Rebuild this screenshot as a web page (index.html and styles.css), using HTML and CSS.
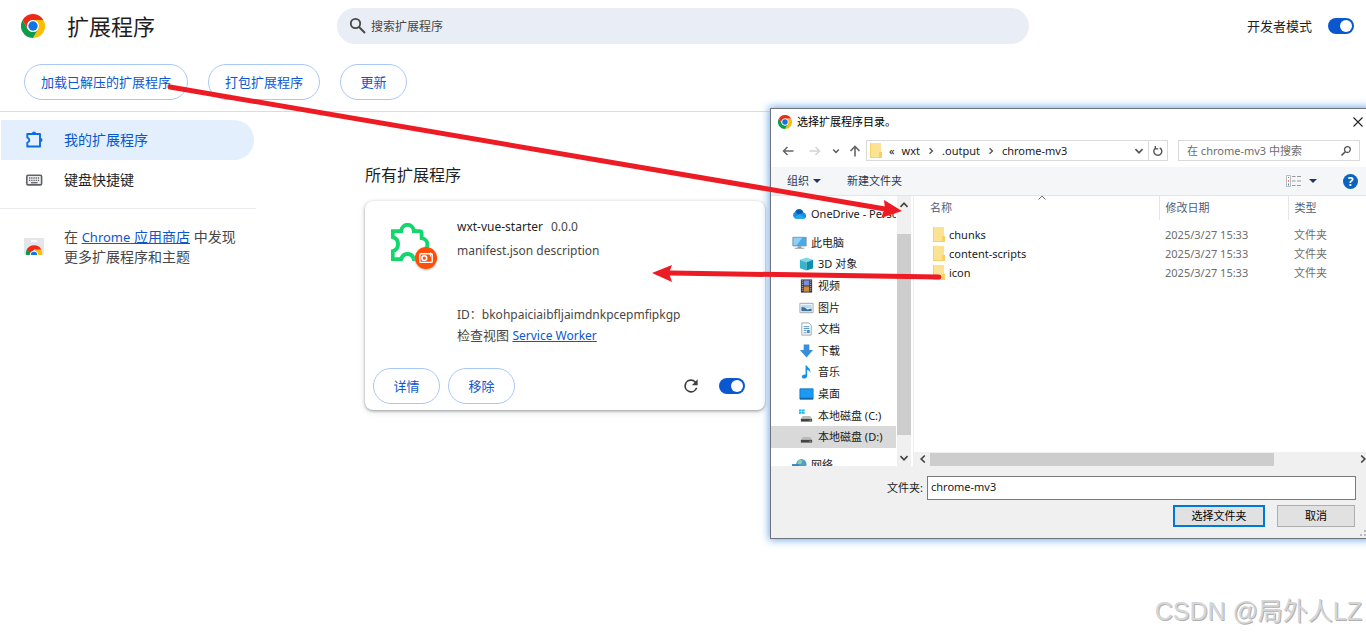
FILE: index.html
```html
<!DOCTYPE html>
<html lang="zh-CN">
<head>
<meta charset="utf-8">
<title>扩展程序</title>
<meta name="viewport" content="width=device-width, initial-scale=1">
<link rel="stylesheet" href="styles.css">
</head>
<body>
<svg class="sprite" aria-hidden="true">
  <symbol id="chrome" viewBox="0 0 48 48">
    <path fill="#fdbd00" d="M24 12h20.8A24 24 0 0 1 24 48l10.4-18z"/>
    <path fill="#0b9d4d" d="M3.2 12A24 24 0 0 0 24 48l10.4-18a12 12 0 0 1-20.8 0z"/>
    <path fill="#ee2a16" d="M3.2 12a24 24 0 0 1 41.6 0H24a12 12 0 0 0-10.4 18z"/>
    <circle cx="24" cy="24" r="12" fill="#fff"/>
    <circle cx="24" cy="24" r="9.4" fill="#1073e8"/>
  </symbol>
  <symbol id="folder" viewBox="0 0 12 15">
    <path fill="#fce394" d="M0 0h11v9h1v6H0z"/>
    <path fill="#f6d266" d="M0 0h1v15H0zM9 9h3v6H9zM0 14h12v1H0z"/>
  </symbol>
  <symbol id="chev" viewBox="0 0 10 10">
    <path d="M1.500 3.200 5 6.800l3.500-3.600" fill="none" stroke="currentColor" stroke-width="1.700"/>
  </symbol>
  <symbol id="puzzle" viewBox="0 0 20 20">
    <path d="M3.300 4H16v12.500H3.300v-3.800q2-.600 2-2.500t-2-2.500z" fill="none" stroke="currentColor" stroke-width="1.900" stroke-linejoin="round"/>
    <path d="M8 3.500a2 2 0 0 1 4 0zM16.500 8a2 2 0 0 1 0 4z" fill="currentColor"/>
  </symbol>
</svg>

<header class="topbar">
  <div class="brand">
    <svg class="logo"><use href="#chrome"/></svg>
    <h1>扩展程序</h1>
  </div>
  <label class="search">
    <svg class="search-icon" viewBox="0 0 18 18"><circle cx="6.500" cy="6.500" r="4.700" fill="none" stroke="#474747" stroke-width="1.800"/><path d="m10 10 6 6" stroke="#474747" stroke-width="2"/></svg>
    <input type="search" placeholder="搜索扩展程序" aria-label="搜索扩展程序">
  </label>
  <label class="dev-mode">开发者模式 <input class="switch" type="checkbox" role="switch" checked></label>
</header>

<div class="actions">
  <button class="pill" type="button">加载已解压的扩展程序</button>
  <button class="pill" type="button">打包扩展程序</button>
  <button class="pill" type="button">更新</button>
</div>

<div class="layout">
  <nav class="sidebar">
    <a class="nav-item active" href="#extensions"><svg class="nav-icon"><use href="#puzzle"/></svg>我的扩展程序</a>
    <a class="nav-item" href="#shortcuts">
      <svg class="nav-icon" viewBox="0 0 20 20"><rect x="2.800" y="5.300" width="14.800" height="9.600" rx="1.200" fill="#eee" stroke="#5f6368" stroke-width="1.600"/><path d="M5 8h10.500M5 10.300h10.500" stroke="#5f6368" stroke-width="1.300" stroke-dasharray="1.300 .900"/><path d="M7 12.700h6.500" stroke="#5f6368" stroke-width="1.300"/></svg>键盘快捷键</a>
    <div class="store">
      <svg class="store-icon" viewBox="0 0 20 18">
        <path fill="#e3e6ea" d="M0 0h20v16l-1 1H1l-1-1z"/><path fill="#fff" d="M7 2h6v2H7z"/>
        <path fill="#0b9d4d" d="M2 17a8 8 0 0 1 2-7l4 7z"/><path fill="#fdbd00" d="M11 11h6a8 8 0 0 1 1 6h-7z"/>
        <path fill="#ee2a16" d="M3 11.500a8.200 8.200 0 0 1 14.300 0H10L7 15z"/>
        <path fill="#fff" d="M5.800 17a4.200 4.200 0 0 1 8.400 0z"/><path fill="#1073e8" d="M6.800 17a3.200 3.200 0 0 1 6.400 0z"/>
      </svg>
      <p>在 <a href="#store"><span class="latin">Chrome</span> 应用商店</a> 中发现更多扩展程序和主题</p>
    </div>
  </nav>

  <main class="content">
    <h2>所有扩展程序</h2>
    <article class="card">
      <div class="card-main">
        <div class="ext-icon">
          <svg class="ext-puzzle" viewBox="0 0 108 108"><path d="M5 103V80C25 75 25 45 5 40V23H29C31-1 63-1 65 23H81Q87 23 87 29V43C109 46 109 76 87 79V103H65C60 83 34 83 29 103Z" fill="none" stroke="#11d76d" stroke-width="11"/></svg>
          <svg class="ext-badge" viewBox="0 0 22 22"><circle cx="11" cy="11" r="11" fill="#ff4e08"/><rect x="4.800" y="6.800" width="12.400" height="8.600" rx="1" fill="none" stroke="#fff" stroke-width="1.400"/><circle cx="9.300" cy="11.100" r="2.400" fill="none" stroke="#fff" stroke-width="1.600"/><path d="M15.500 5.500v4M14 7h3.500" stroke="#fff"/></svg>
        </div>
        <div class="ext-info">
          <div class="ext-title"><h3>wxt-vue-starter</h3><span>0.0.0</span></div>
          <p class="ext-desc">manifest.json description</p>
          <p class="ext-id">ID：bkohpaiciaibfljaimdnkpcepmfipkgp</p>
          <p class="ext-views">检查视图 <a href="#worker">Service Worker</a></p>
        </div>
      </div>
      <div class="card-foot">
        <button class="pill" type="button">详情</button>
        <button class="pill" type="button">移除</button>
        <button class="reload" type="button" aria-label="重新加载"><svg viewBox="0 0 24 24"><path fill="#3c4043" d="M17.650 6.350A8 8 0 1 0 19.730 14h-2.080A6 6 0 1 1 12 6c1.660 0 3.140.690 4.220 1.780L13 11h7V4z"/></svg></button>
        <input class="switch" type="checkbox" role="switch" aria-label="启用" checked>
      </div>
    </article>
  </main>
</div>

<section class="dialog" role="dialog" aria-label="选择扩展程序目录。">
  <div class="dlg-title">
    <svg class="dlg-logo"><use href="#chrome"/></svg>
    <span>选择扩展程序目录。</span>
    <button class="icon-btn close" type="button" aria-label="关闭"><svg viewBox="0 0 10 10"><path d="m.500.500 9 9M9.500.500l-9 9" stroke="#222" stroke-width="1.100"/></svg></button>
  </div>
  <div class="dlg-nav">
    <button class="icon-btn" type="button" aria-label="后退"><svg class="i12" viewBox="0 0 12 12"><path d="M11.500 6H1.500M5.500 2l-4 4 4 4" fill="none" stroke="#666" stroke-width="1.500"/></svg></button>
    <button class="icon-btn" type="button" aria-label="前进"><svg class="i12" viewBox="0 0 12 12"><path d="M.500 6h10M6.500 2l4 4-4 4" fill="none" stroke="#d4d4d4" stroke-width="1.500"/></svg></button>
    <button class="icon-btn recent" type="button" aria-label="最近"><svg class="i8"><use href="#chev"/></svg></button>
    <button class="icon-btn" type="button" aria-label="向上"><svg class="i12" viewBox="0 0 12 12"><path d="M6 11.500v-10M1.500 6 6 1.500 10.500 6" fill="none" stroke="#666" stroke-width="1.600"/></svg></button>
    <div class="address">
      <svg class="folder"><use href="#folder"/></svg>
      <span class="back-crumbs">«</span><span class="crumb">wxt</span>
      <svg class="crumb-sep"><use href="#chev"/></svg><span class="crumb">.output</span>
      <svg class="crumb-sep"><use href="#chev"/></svg><span class="crumb">chrome-mv3</span>
      <button class="icon-btn history" type="button" aria-label="历史"><svg class="i10"><use href="#chev"/></svg></button>
      <button class="icon-btn refresh" type="button" aria-label="刷新"><svg class="i10" viewBox="0 0 10 10"><path d="M6.800 1.800A4 4 0 1 1 2.500 2M2.300 0v2.900h3" fill="none" stroke="#555" stroke-width="1.400"/></svg></button>
    </div>
    <label class="dlg-search"><input type="text" placeholder="在 chrome-mv3 中搜索" aria-label="搜索">
      <svg class="i10" viewBox="0 0 10 10"><circle cx="6.400" cy="3.600" r="2.900" fill="none" stroke="#555" stroke-width="1.300"/><path d="M4.300 5.700.500 9.500" stroke="#555" stroke-width="1.600"/></svg></label>
  </div>
  <div class="dlg-tools">
    <button class="tool" type="button">组织 <i class="tri"></i></button>
    <button class="tool" type="button">新建文件夹</button>
    <button class="tool view" type="button" aria-label="视图"><svg viewBox="0 0 16 12"><path fill="#fff" stroke="#aaa" stroke-width=".800" d="M.500.500h4v11h-4z"/><path fill="#777" d="M2 2h1v1H2z"/><path fill="#e77" d="M2 5h1v2H2z"/><path fill="#48c" d="M2 8.500h1v2H2z"/><path d="M6 1.500h3.500M11 1.500h4M6 6h3.500M11 6h4M6 10.500h3.500M11 10.500h4" stroke="#999"/></svg><i class="tri"></i></button>
    <button class="help" type="button" aria-label="帮助">?</button>
  </div>

  <div class="dlg-body">
    <div class="tree">
      <ul class="tree-list">
        <li><svg viewBox="0 0 16 14"><path fill="#1490df" d="M4 12a4 4 0 0 1-.500-7.500A4.500 4.500 0 0 1 12 5.500a3.300 3.300 0 0 1 .500 6.500z"/><path fill="#0a5cad" d="M3.500 4.500A4.500 4.500 0 0 1 12 5.500L7 8z"/><path fill="#28a8ea" d="m2 11 6-4 6 4.500-1.500.500H4z"/></svg><span>OneDrive - Personal</span></li>
      </ul>
      <ul class="tree-list computer">
        <li><svg viewBox="0 0 16 14"><path fill="#4aa9e8" stroke="#6d8aa0" stroke-width=".800" d="M.900.900h14.200v9.200H.900z"/><path fill="#8fd0f7" d="M1.500 1.500H11l-6 8H1.500z"/><path fill="#8d9ba6" d="M6 10.500h4V12h3v1.200H3V12h3z"/></svg><span>此电脑</span></li>
        <li class="sub"><svg viewBox="0 0 16 14"><path fill="#7fd8e8" d="m8 0 7 2.500L8 5 1 2.500z"/><path fill="#38b4cc" d="M1 2.500 8 5v9l-7-2.500z"/><path fill="#0f8dad" d="m15 2.500-7 2.500v9l7-2.500z"/></svg><span>3D 对象</span></li>
        <li class="sub"><svg viewBox="0 0 16 14"><path fill="#333" d="M2 0h12v14H2z"/><path fill="#7c8ee0" d="M5 1h6v5.500H5z"/><path fill="#d9883b" d="M5 7.500h6V13H5z"/><path d="M3.500 1v12M12.500 1v12" stroke="#ddd" stroke-dasharray="1 1"/></svg><span>视频</span></li>
        <li class="sub"><svg viewBox="0 0 16 14"><path fill="#fff" stroke="#98a2aa" d="M1 2h14v10H1z"/><path fill="#b6dcf5" d="M2.500 3.500h11v4h-11z"/><path fill="#3c719c" d="M2.500 6 6 6.500l3 2 4.500-1v3h-11z"/></svg><span>图片</span></li>
        <li class="sub"><svg viewBox="0 0 16 14"><path fill="#fff" stroke="#98a2aa" d="M3 .500h7.500L13 3v10.500H3z"/><path d="M5 4.500h6M5 6.500h6M5 8.500h3M5 11h3" stroke="#4a90c8"/><path fill="#4a90c8" d="M8.500 8h3v3.500h-3z"/></svg><span>文档</span></li>
        <li class="sub"><svg viewBox="0 0 16 14"><path fill="#3a8ddb" d="M5 0h6v6h4l-7 8-7-8h4z"/></svg><span>下载</span></li>
        <li class="sub"><svg viewBox="0 0 16 14"><path fill="#1592e6" d="M7 0h1.500c.500 2.500 4.500 3 3.500 8-.500-2-1.500-3-3.300-3.200V11c0 2-1.500 3-3.200 3S3 13 3 11.800s2-2.600 4-2z"/></svg><span>音乐</span></li>
        <li class="sub"><svg viewBox="0 0 16 14"><path fill="#1b9af3" stroke="#1478c4" d="M1 1.500h14v11H1z"/><path fill="#0d65ab" d="M1 11h14v1.500H1z"/></svg><span>桌面</span></li>
        <li class="sub"><svg viewBox="0 0 16 14"><path fill="#16b4ef" d="M0 0h2.500v2H0zM3 0h3v2H3zM0 2.500h2.500v2H0zM3 2.500h3v2H3z"/><path fill="#bbb" d="M4 7h8l2 3H2z"/><path fill="#444" d="M2 10h12v3H2z"/><path fill="#4fd25b" d="M11 11h2v1h-2z"/></svg><span>本地磁盘 (C:)</span></li>
        <li class="sub selected"><svg viewBox="0 0 16 14"><path fill="#bbb" d="M4 7h8l2 3H2z"/><path fill="#444" d="M2 10h12v3H2z"/><path fill="#4fd25b" d="M11 11h2v1h-2z"/></svg><span>本地磁盘 (D:)</span></li>
      </ul>
      <ul class="tree-list network">
        <li><svg viewBox="0 0 16 14"><circle cx="10" cy="6" r="5.500" fill="#4d9fc4"/><path fill="#8ecbb0" d="M8 1.500c3 0 4 2 2 4s-3 0-4 1c0-2 0-4 2-5z"/><path fill="#3b86c2" d="M0 6h8v6H0z"/></svg><span>网络</span></li>
      </ul>
    </div>
    <div class="vscroll" aria-hidden="true">
      <svg class="i10 up"><use href="#chev"/></svg><div class="vthumb"></div><svg class="i10"><use href="#chev"/></svg>
    </div>
    <div class="files">
      <table>
        <thead><tr><th class="col-name">名称<svg class="i10 sort" viewBox="0 0 10 10"><path d="m1.500 6.500 3.500-3.500 3.500 3.500" fill="none" stroke="#777"/></svg></th><th class="col-date">修改日期</th><th>类型</th></tr></thead>
        <tbody>
          <tr><td><span class="file"><svg class="folder"><use href="#folder"/></svg>chunks</span></td><td>2025/3/27 15:33</td><td>文件夹</td></tr>
          <tr><td><span class="file"><svg class="folder"><use href="#folder"/></svg>content-scripts</span></td><td>2025/3/27 15:33</td><td>文件夹</td></tr>
          <tr><td><span class="file"><svg class="folder"><use href="#folder"/></svg>icon</span></td><td>2025/3/27 15:33</td><td>文件夹</td></tr>
        </tbody>
      </table>
      <div class="hscroll" aria-hidden="true">
        <svg class="i10 left"><use href="#chev"/></svg><div class="htrack"><div class="hthumb"></div></div><svg class="i10 right"><use href="#chev"/></svg>
      </div>
    </div>
  </div>

  <div class="dlg-foot">
    <div class="folder-field"><label for="folder-name">文件夹:</label><input id="folder-name" type="text" value="chrome-mv3"></div>
    <div class="dlg-buttons"><button class="win-btn primary" type="button">选择文件夹</button><button class="win-btn" type="button">取消</button></div>
    <i class="grip"></i>
  </div>
</section>

<svg class="arrows" aria-hidden="true">
  <g stroke="#ed1c24" stroke-width="5" stroke-linecap="round"><path d="m170 87 715 122"/><path d="m939 277-269-4"/></g>
  <g fill="#ed1c24"><path d="m902 211-21 7 4-9-1-9z"/><path d="m652 273 20-8-3 8 3 9z"/></g>
</svg>
<div class="watermark">CSDN @局外人LZ</div>
</body>
</html>
```
FILE: styles.css
```css
* { box-sizing: border-box; }

body {
  position: relative;
  min-height: 100vh;
  margin: 0;
  overflow: hidden;
  background: #fff;
  color: #1f1f1f;
  font: 13px/20px "Noto Sans", "Noto Sans CJK SC", sans-serif;
}

h1, h2, h3, p, ul { margin: 0; padding: 0; font-weight: 400; }
button, input { font: inherit; color: inherit; }
button { cursor: pointer; }
svg { display: block; flex: none; }
a { color: #0b57d0; }
.sprite { display: none; }

/* Page header */
.topbar {
  display: grid;
  grid-template-columns: minmax(0, 1fr) minmax(0, 692px) minmax(0, 1fr);
  align-items: center;
  height: 52px;
}
.brand { display: flex; align-items: center; gap: 22px; padding-left: 21px; }
.logo { width: 24px; height: 24px; }
h1 { font-size: 22px; line-height: 32px; }
.search {
  display: flex;
  align-items: center;
  gap: 4px;
  height: 36px;
  padding: 0 12px;
  border-radius: 18px;
  background: #e9eef6;
}
.search-icon { width: 18px; height: 18px; }
.search input { flex: 1; min-width: 0; padding: 1px 0 0; border: 0; outline: 0; background: none; font-size: 12px; }
.search input::placeholder { color: #474747; opacity: 1; }
.dev-mode { display: flex; align-items: center; justify-content: flex-end; gap: 16px; padding-right: 12px; }

.switch {
  appearance: none;
  display: flex;
  align-items: center;
  justify-content: flex-end;
  width: 26px;
  height: 16px;
  margin: 0;
  padding: 2px;
  border-radius: 8px;
  background: #0b57d0;
}
.switch::before { content: ""; width: 12px; height: 12px; border-radius: 50%; background: #fff; }

.actions { display: flex; gap: 20px; padding: 12px 24px 11px; border-bottom: 1px solid #dadce0; }
.pill {
  height: 36px;
  min-width: 67px;
  padding: 0 16px;
  border: 1px solid #a8c7fa;
  border-radius: 18px;
  background: #fff;
  color: #0b57d0;
}

/* Sidebar and content */
.layout { display: flex; }
.sidebar { width: 256px; padding-top: 8px; }
.nav-item {
  display: flex;
  align-items: center;
  gap: 20px;
  height: 40px;
  margin: 0 2px 0 1px;
  padding-left: 23px;
  border-radius: 0 20px 20px 0;
  color: #1f1f1f;
  font-size: 14px;
  text-decoration: none;
}
.nav-item.active { background: #e3effd; color: #0b57d0; }
.nav-icon { width: 20px; height: 20px; }
.active .nav-icon { color: #0b6be3; }
.store {
  display: flex;
  align-items: center;
  gap: 20px;
  margin-top: 8px;
  padding: 18px 16px 0 24px;
  border-top: 1px solid #e8eaed;
  color: #474747;
  font-size: 14px;
  line-height: 19px;
}
.latin { font-size: 13px; }
.store-icon { width: 20px; height: 18px; }
.content { flex: 1; padding: 51px 24px 0 109px; }
h2 { font-size: 16px; line-height: 24px; margin-bottom: 14px; }
.card {
  max-width: 400px;
  border-radius: 8px;
  background: #fff;
  box-shadow: 0 1px 3px rgba(60, 64, 67, .45), 0 2px 6px rgba(60, 64, 67, .15);
}
.card-main { display: flex; gap: 18px; padding: 16px 20px 0 24px; }
.ext-icon { position: relative; width: 50px; height: 54px; padding: 6px 0 0 2px; }
.ext-puzzle { width: 38px; height: 38px; }
.ext-badge { position: absolute; left: 26px; top: 30px; width: 22px; height: 22px; filter: drop-shadow(0 1px 1px #bbb); }
.ext-info { color: #474747; font-size: 12px; }
.ext-title { display: flex; gap: 8px; }
h3 { color: #1f1f1f; font-size: 12px; }
.ext-desc { margin: 4px 0 44px; }
.ext-views { font-size: 13px; }
.ext-views a { font-size: 12px; }
.card-foot { display: flex; align-items: center; gap: 8px; padding: 22px 20px 6px 8px; }
.reload { width: 20px; height: 20px; margin: 0 10px 0 auto; padding: 0; border: 0; background: none; }

/* Folder picker window */
.dialog {
  position: absolute;
  top: 108px;
  right: -4px;
  width: 600px;
  border: 1px solid #6e737a;
  background: #fff;
  box-shadow: 0 0 8px 1px #6fa8ec;
  color: #1a1a1a;
  font-size: 11px;
  line-height: 18px;
}
.icon-btn { display: grid; place-items: center; flex: none; padding: 0; border: 0; background: none; color: #555; }
.i12 { width: 12px; height: 12px; }
.i10 { width: 10px; height: 10px; }
.i8 { width: 8px; height: 8px; }
.dlg-title { display: flex; align-items: center; gap: 5px; height: 26px; padding: 0 6px 0 7px; color: #000; }
.dlg-logo { width: 14px; height: 14px; }
.close { margin-left: auto; }
.close svg { width: 10px; height: 10px; }
.dlg-nav { display: flex; align-items: center; padding: 5px 9px 6px 11px; gap: 15px; }
.recent { margin: 0 -6px 0 -4px; }
.address { display: flex; align-items: center; flex: 1; min-width: 0; height: 21px; margin-left: -10px; padding-left: 3px; border: 1px solid #d9d9d9; }
.folder { width: 12px; height: 15px; }
.back-crumbs { margin-left: 7px; }
.crumb { margin-left: 7px; }
.crumb-sep { width: 8px; height: 8px; margin-left: 7px; color: #555; transform: rotate(-90deg); }
.history { margin: 0 4px 0 auto; }
.refresh { width: 19px; align-self: stretch; border-left: 1px solid #d9d9d9; }
.dlg-search { display: flex; align-items: center; width: 182px; height: 21px; margin-left: -5px; padding: 0 8px; border: 1px solid #d9d9d9; }
.dlg-search input { flex: 1; min-width: 0; padding: 0; border: 0; outline: 0; }
.dlg-search input::placeholder { color: #6d6d6d; opacity: 1; }
.dlg-tools { display: flex; align-items: center; gap: 26px; height: 29px; padding: 0 11px 0 16px; border-bottom: 1px solid #e5e5e5; background: #f5f6f7; color: #1e395b; }
.tool { display: flex; align-items: center; gap: 4px; padding: 0; border: 0; background: none; }
.tri { width: 0; border: 4px solid transparent; border-top-color: #1e395b; border-bottom: 0; }
.view { margin-left: auto; gap: 7px; }
.view svg { width: 16px; height: 12px; }
.help { width: 15px; height: 15px; padding: 0; border: 0; border-radius: 50%; background: #0b63c1; color: #fff; font-size: 12px; font-weight: 700; line-height: 15px; }

.dlg-body { display: flex; height: 270px; }
.tree { width: 125px; padding-top: 7px; overflow: hidden; }
.tree-list { list-style: none; }
.tree-list li { display: flex; align-items: center; gap: 4px; min-height: 21px; padding-left: 21px; white-space: nowrap; }
.tree-list .sub { padding-left: 28px; }
.tree-list li svg { width: 15px; height: 14px; }
.tree-list .selected { background: #d9d9d9; }
.computer { display: grid; grid-auto-rows: 1fr; height: 216px; margin: 8px 0 6px; }
.vscroll { display: flex; flex-direction: column; align-items: center; justify-content: space-between; width: 14px; margin: 0 2px 0 1px; padding: 4px 0 3px; background: #f0f0f0; color: #444; }
.vthumb { align-self: stretch; height: 201px; margin-top: 6px; background: #cdcdcd; }
.up { transform: rotate(180deg); }
.files { display: flex; flex: 1; flex-direction: column; justify-content: space-between; min-width: 0; border-left: 1px solid #eee; }
table { width: calc(100% - 10px); margin-left: 10px; border-collapse: collapse; table-layout: fixed; }
th { position: relative; height: 24px; padding: 0 0 0 6px; border-left: 1px solid #e5e5e5; color: #4c607a; font-weight: 400; text-align: left; }
.col-name { width: 235px; border-left: 0; }
.col-date { width: 129px; }
.sort { position: absolute; top: -3px; left: 113px; }
tbody::before { content: ""; display: block; height: 5px; }
td { height: 19px; padding: 0 0 0 6px; color: #6d6d6d; }
.file { display: flex; align-items: center; gap: 4px; padding-left: 3px; color: #1a1a1a; }
.hscroll { display: flex; align-items: center; height: 14px; padding: 0 1px 0 4px; background: #f0f0f0; color: #444; }
.left { transform: rotate(90deg); }
.right { transform: rotate(-90deg); }
.htrack { flex: 1; margin: 0 3px 0 2px; }
.hthumb { width: 81%; height: 13px; background: #cdcdcd; }

.dlg-foot { position: relative; padding: 10px 13px 11px; background: #f0f0f0; }
.folder-field { display: flex; align-items: center; justify-content: flex-end; gap: 4px; }
.folder-field input { width: 429px; height: 24px; padding: 0 3px 3px; border: 1px solid #7a7a7a; background: #fff; }
.dlg-buttons { display: flex; justify-content: flex-end; gap: 12px; margin-top: 5px; padding-right: 1px; }
.win-btn { width: 78px; height: 22px; padding: 0; border: 1px solid #adadad; background: #e1e1e1; color: #000; }
.primary { width: 92px; border: 2px solid #0078d7; }
.grip { position: absolute; right: 3px; bottom: 2px; width: 6px; height: 6px; border-right: 2px dotted #bbb; border-bottom: 2px dotted #bbb; }

/* Annotation layer */
.arrows { position: absolute; inset: 0; width: 100%; height: 100%; pointer-events: none; }
.watermark {
  position: absolute;
  right: 4px;
  bottom: 4px;
  color: #d6d6d6;
  font: 25px/38px "Liberation Sans", "Noto Sans CJK SC", sans-serif;
  text-shadow: 1px 1px 0 #b0b0b0;
}
```
